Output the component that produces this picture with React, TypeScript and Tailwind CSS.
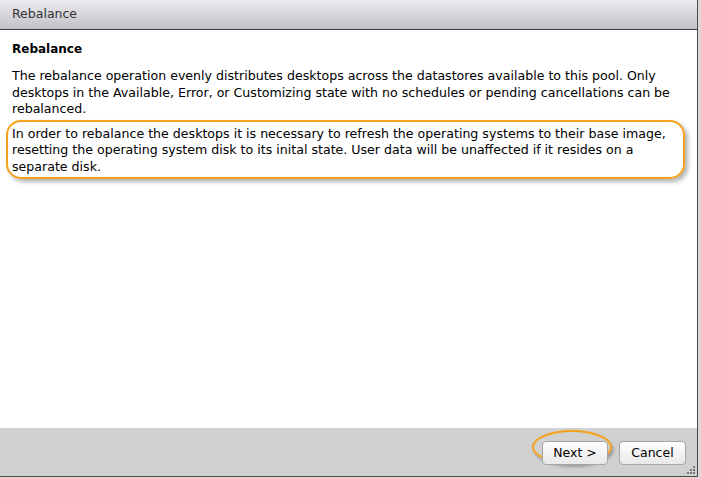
export default function App() {
  return (
    <div className="w-[701px] h-[478px] bg-[#d9d9d9] flex font-['DejaVu_Sans',Verdana,sans-serif] text-[12.6px] text-black overflow-hidden">
      <div className="w-[698px] h-[477px] flex flex-col border-r border-b border-[#4a4a4a] bg-white">
        {/* title bar */}
        <div className="h-[30px] shrink-0 flex items-center px-3 bg-gradient-to-b from-[#edecf0] to-[#c1c1c7] border-b border-[#3c3c3c] text-[#333] text-[12.5px]">
          Rebalance
        </div>

        {/* body */}
        <div className="flex-1 px-3 pt-[11px]">
          <div className="font-bold text-[12px] leading-[17px]">Rebalance</div>
          <div className="mt-[10px] leading-[16.5px]">
            <div className="whitespace-nowrap">The rebalance operation evenly distributes desktops across the datastores available to this pool. Only</div>
            <div className="whitespace-nowrap">desktops in the Available, Error, or Customizing state with no schedules or pending cancellations can be</div>
            <div className="whitespace-nowrap">rebalanced.</div>
          </div>
          <div className="relative mt-[8px] leading-[16.5px]">
            <div className="absolute -left-[6px] -top-[6px] w-[679px] h-[59px] rounded-[15px] border-2 border-[#f7a11a] shadow-[3px_3px_4px_rgba(0,0,0,0.3)]"></div>
            <div className="whitespace-nowrap">In order to rebalance the desktops it is necessary to refresh the operating systems to their base image,</div>
            <div className="whitespace-nowrap">resetting the operating system disk to its inital state. User data will be unaffected if it resides on a</div>
            <div className="whitespace-nowrap">separate disk.</div>
          </div>
        </div>

        {/* footer */}
        <div className="relative h-[48px] shrink-0 bg-[#d0d0d0] flex items-center justify-end gap-[11px] pr-[11px] pt-[2px]">
          <div className="relative">
            <div className="absolute -left-[10px] -top-[11px] w-[80px] h-[34px] rounded-[50%] border-2 border-[#f7a11a] shadow-[2px_3px_3px_rgba(0,0,0,0.25)]"></div>
            <button className="relative w-[66px] h-[24px] rounded-[4px] border border-[#a6a6a6] bg-gradient-to-b from-white to-[#e8e8e8] text-[12.5px] text-black">Next &gt;</button>
          </div>
          <button className="w-[67px] h-[24px] rounded-[4px] border border-[#a6a6a6] bg-gradient-to-b from-white to-[#e8e8e8] text-[12.5px] text-black">Cancel</button>
          <svg className="absolute right-[2px] bottom-[2px]" width="8" height="8" viewBox="0 0 8 8">
            <rect x="6" y="0" width="2" height="2" fill="#777" />
            <rect x="3" y="3" width="2" height="2" fill="#777" />
            <rect x="6" y="3" width="2" height="2" fill="#777" />
            <rect x="0" y="6" width="2" height="2" fill="#777" />
            <rect x="3" y="6" width="2" height="2" fill="#777" />
            <rect x="6" y="6" width="2" height="2" fill="#777" />
          </svg>
        </div>
      </div>
    </div>
  );
}
